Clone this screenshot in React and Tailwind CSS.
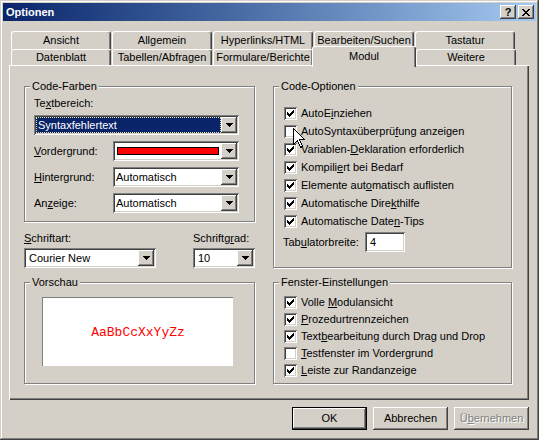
import React from 'react';

const raised = 'bg-[#d4d0c8] shadow-[inset_-1px_-1px_#404040,inset_1px_1px_#fff,inset_-2px_-2px_#808080]';
const sunken = 'shadow-[inset_1px_1px_#808080,inset_-1px_-1px_#fff,inset_2px_2px_#404040,inset_-2px_-2px_#d4d0c8]';

const tabsBack = ['Ansicht', 'Allgemein', 'Hyperlinks/HTML', 'Bearbeiten/Suchen', 'Tastatur'];
const tabsFront = ['Datenblatt', 'Tabellen/Abfragen', 'Formulare/Berichte', 'Modul', 'Weitere'];

function Arrow() {
    return (
        <svg width="7" height="4" viewBox="0 0 7 4" shapeRendering="crispEdges">
            <rect x="0" y="0" width="7" height="1" fill="#000" />
            <rect x="1" y="1" width="5" height="1" fill="#000" />
            <rect x="2" y="2" width="3" height="1" fill="#000" />
            <rect x="3" y="3" width="1" height="1" fill="#000" />
        </svg>
    );
}

function Combo({ w, children }) {
    return (
        <div className={`${w} h-[20px] bg-white p-[2px] flex ${sunken}`}>
            <div className="flex-1 min-w-0 flex items-center">{children}</div>
            <div className={`w-[16px] h-[16px] flex items-center justify-center ${raised}`}>
                <Arrow />
            </div>
        </div>
    );
}

function Tick() {
    return (
        <svg className="absolute left-[3px] top-[3px]" width="7" height="7" viewBox="0 0 7 7" shapeRendering="crispEdges">
            <rect x="6" y="0" width="1" height="1" />
            <rect x="5" y="1" width="2" height="1" />
            <rect x="0" y="2" width="1" height="1" />
            <rect x="4" y="2" width="3" height="1" />
            <rect x="0" y="3" width="2" height="1" />
            <rect x="3" y="3" width="3" height="1" />
            <rect x="0" y="4" width="5" height="1" />
            <rect x="1" y="5" width="3" height="1" />
            <rect x="2" y="6" width="1" height="1" />
        </svg>
    );
}

function Check({ checked, children }) {
    return (
        <div className="flex items-center h-[13px] gap-[4px]">
            <div className={`w-[13px] h-[13px] bg-white relative shrink-0 ${sunken}`}>
                {checked && <Tick />}
            </div>
            <span className="whitespace-nowrap">{children}</span>
        </div>
    );
}

function Group({ title, className, children }) {
    return (
        <div className={`relative border border-[#808080] shadow-[1px_1px_#fff,inset_1px_1px_#fff] ${className}`}>
            <span className="absolute -top-[7px] left-[5px] px-[2px] bg-[#d4d0c8] leading-[13px] whitespace-nowrap">{title}</span>
            {children}
        </div>
    );
}

function Tab({ label, selected }) {
    if (selected) {
        return (
            <div className="relative z-10 -mt-[3px] -ml-[2px] w-[104px] h-[21px] bg-[#d4d0c8] flex justify-center pt-[3px] border-l border-t border-white border-r border-r-[#404040] rounded-t-[3px] shadow-[inset_-1px_0_#808080]">
                {label}
            </div>
        );
    }
    return (
        <div className="w-[100px] mr-[1px] h-full flex items-center justify-center border-l border-t border-white border-r border-r-[#404040] rounded-t-[3px] shadow-[inset_-1px_0_#808080] whitespace-nowrap">
            {label}
        </div>
    );
}

export default function App() {
    return (
        <div className="relative w-[539px] h-[440px] bg-[#d4d0c8] p-[3px] flex flex-col font-['Liberation_Sans',Arial,sans-serif] text-[11px] leading-[13px] text-black shadow-[inset_-1px_-1px_#404040,inset_1px_1px_#d4d0c8,inset_-2px_-2px_#808080,inset_2px_2px_#fff]">
            {/* title bar */}
            <div className="h-[18px] flex items-center bg-linear-to-r from-[#0a246a] to-[#a6caf0] pl-[3px] pr-[2px]">
                <span className="text-white font-bold flex-1">Optionen</span>
                <div className={`w-[16px] h-[14px] flex items-center justify-center font-bold text-[11px] leading-none ${raised}`}>?</div>
                <div className={`ml-[2px] w-[16px] h-[14px] flex items-center justify-center ${raised}`}>
                    <svg width="8" height="7" viewBox="0 0 8 7" shapeRendering="crispEdges">
                        <rect x="0" y="0" width="2" height="1" />
                        <rect x="6" y="0" width="2" height="1" />
                        <rect x="1" y="1" width="2" height="1" />
                        <rect x="5" y="1" width="2" height="1" />
                        <rect x="2" y="2" width="4" height="1" />
                        <rect x="3" y="3" width="2" height="1" />
                        <rect x="2" y="4" width="4" height="1" />
                        <rect x="1" y="5" width="2" height="1" />
                        <rect x="5" y="5" width="2" height="1" />
                        <rect x="0" y="6" width="2" height="1" />
                        <rect x="6" y="6" width="2" height="1" />
                    </svg>
                </div>
            </div>

            <div className="pl-[6px] flex flex-col">
                {/* tabs */}
                <div className="mt-[10px] pl-[2px] flex h-[18px]">
                    {tabsBack.map(t => <Tab key={t} label={t} />)}
                </div>
                <div className="pl-[2px] flex h-[16px]">
                    {tabsFront.map(t => <Tab key={t} label={t} selected={t === 'Modul'} />)}
                </div>

                {/* panel */}
                <div className="w-[520px] h-[335px] flex pt-[21px] pl-[15px] shadow-[inset_1px_1px_#fff,inset_-1px_-1px_#404040,inset_-2px_-2px_#808080]">
                    <div className="w-[231px] flex flex-col">
                        <Group title="Code-Farben" className="w-[231px] h-[136px] pt-[10px] pl-[9px]">
                            <div className="mb-[5px]">Te<u>x</u>tbereich:</div>
                            <Combo w="w-[205px]">
                                <div className="w-full h-full bg-[#0a246a] text-white pl-[2px] flex items-center outline-1 outline-dotted outline-[#e8e0a0] -outline-offset-1">Syntaxfehlertext</div>
                            </Combo>
                            <div className="mt-[6px] flex items-center">
                                <span className="w-[79px]"><u>V</u>ordergrund:</span>
                                <Combo w="w-[126px]">
                                    <div className="ml-[2px] w-[102px] h-[8px] bg-[#ff0000] border border-black" />
                                </Combo>
                            </div>
                            <div className="mt-[6px] flex items-center">
                                <span className="w-[79px]"><u>H</u>intergrund:</span>
                                <Combo w="w-[126px]"><span className="pl-[1px]">Automatisch</span></Combo>
                            </div>
                            <div className="mt-[6px] flex items-center">
                                <span className="w-[79px]">An<u>z</u>eige:</span>
                                <Combo w="w-[126px]"><span className="pl-[1px]">Automatisch</span></Combo>
                            </div>
                        </Group>

                        <div className="mt-[10px] flex justify-between">
                            <div className="flex flex-col">
                                <span className="mb-[3px]"><u>S</u>chriftart:</span>
                                <Combo w="w-[132px]"><span className="pl-[3px]">Courier New</span></Combo>
                            </div>
                            <div className="flex flex-col">
                                <span className="mb-[3px]">Schriftg<u>r</u>ad:</span>
                                <Combo w="w-[62px]"><span className="pl-[3px]">10</span></Combo>
                            </div>
                        </div>

                        <Group title="Vorschau" className="mt-[14px] w-[231px] h-[102px] pt-[14px] pl-[17px]">
                            <div className="w-[191px] h-[69px] bg-white border-t border-l border-[#808080] flex items-center justify-center">
                                <span className="font-['Liberation_Mono',monospace] text-[13px] text-[#ff0000]">AaBbCcXxYyZz</span>
                            </div>
                        </Group>
                    </div>

                    <div className="ml-[18px] w-[239px] flex flex-col">
                        <Group title="Code-Optionen" className="w-[239px] h-[182px] pt-[20px] pl-[10px]">
                            <div className="flex flex-col gap-[5px]">
                                <Check checked>AutoE<u>i</u>nziehen</Check>
                                <Check>AutoSyntaxüberprü<u>f</u>ung anzeigen</Check>
                                <Check checked>Variablen-<u>D</u>eklaration erforderlich</Check>
                                <Check checked>Kompili<u>e</u>rt bei Bedarf</Check>
                                <Check checked>Elemente aut<u>o</u>matisch auflisten</Check>
                                <Check checked>Automatische Dire<u>k</u>thilfe</Check>
                                <Check checked>Automatische Date<u>n</u>-Tips</Check>
                            </div>
                            <div className="mt-[4px] -ml-[1px] flex items-center">
                                <span className="w-[82px]">Tab<u>u</u>latorbreite:</span>
                                <div className={`w-[40px] h-[20px] bg-white flex items-center pl-[5px] ${sunken}`}>4</div>
                            </div>
                        </Group>

                        <Group title="Fenster-Einstellungen" className="mt-[14px] w-[239px] h-[102px] pt-[13px] pl-[10px]">
                            <div className="flex flex-col gap-[4px]">
                                <Check checked>Volle <u>M</u>odulansicht</Check>
                                <Check checked><u>P</u>rozedurtrennzeichen</Check>
                                <Check checked>Text<u>b</u>earbeitung durch Drag und Drop</Check>
                                <Check><u>T</u>estfenster im Vordergrund</Check>
                                <Check checked><u>L</u>eiste zur Randanzeige</Check>
                            </div>
                        </Group>
                    </div>
                </div>

                {/* buttons */}
                <div className="w-[520px] mt-[7px] flex justify-end gap-[6px]">
                    <div className="w-[75px] h-[23px] border border-black">
                        <div className={`w-full h-full flex items-center justify-center ${raised}`}>OK</div>
                    </div>
                    <div className={`w-[75px] h-[23px] flex items-center justify-center ${raised}`}>Abbrechen</div>
                    <div className={`w-[75px] h-[23px] flex items-center justify-center text-[#808080] [text-shadow:1px_1px_#fff] ${raised}`}>Ü<u>b</u>ernehmen</div>
                </div>
            </div>

            {/* mouse pointer */}
            <svg className="absolute left-[293px] top-[128px] z-20" width="12" height="20" viewBox="0 0 12 20" shapeRendering="crispEdges">
                <path d="M0.5 0.5 L0.5 16.5 L4.5 12.5 L7.5 19.5 L9.5 18.5 L6.5 11.5 L11.5 11.5 Z" fill="#fff" stroke="#000" strokeWidth="1" />
            </svg>
        </div>
    );
}
